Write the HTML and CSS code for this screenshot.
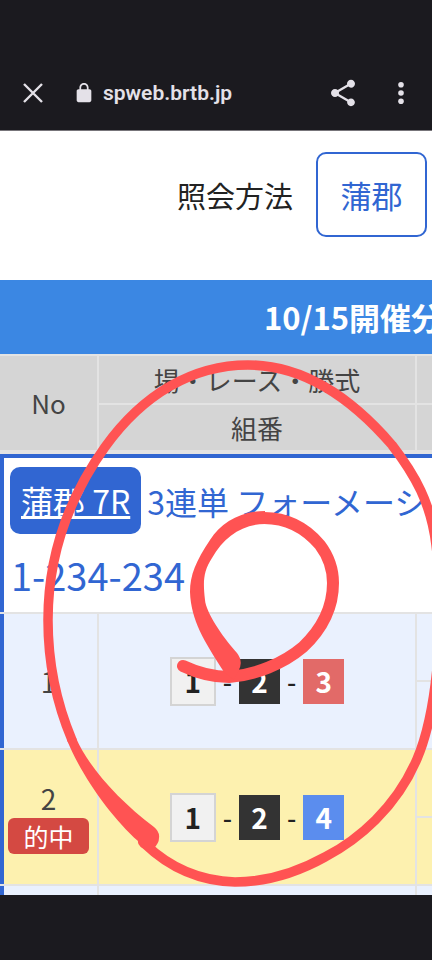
FILE: index.html
```html
<!DOCTYPE html>
<html lang="ja">
  <head>
    <meta charset="UTF-8" />
    <meta name="viewport" content="width=device-width, initial-scale=1.0" />
    <title>照会 - spweb.brtb.jp</title>
    <link rel="stylesheet" href="styles.css">
  </head>
  <body>
    <!-- Browser bar -->
    <header class="browser-bar">
      <button type="button" class="icon-button" aria-label="閉じる">
        <svg width="22" height="22" viewBox="0 0 22 22">
          <path d="M2 2L20 20M20 2L2 20" fill="none" stroke="currentColor" stroke-width="2.4" />
        </svg>
      </button>
      <div class="address">
        <svg width="22" height="22" viewBox="0 0 24 24" fill="currentColor">
          <path d="M18 8h-1V6c0-2.760-2.240-5-5-5S7 3.240 7 6v2H6c-1.100 0-2 .9-2 2v10c0 1.100.9 2 2 2h12c1.100 0 2-.9 2-2V10c0-1.100-.9-2-2-2zM8.900 8V6c0-1.710 1.390-3.100 3.100-3.100s3.100 1.390 3.100 3.100v2z" />
        </svg>
        <span>spweb.brtb.jp</span>
      </div>
      <button type="button" class="icon-button" aria-label="共有">
        <svg width="32" height="32" viewBox="0 0 24 24" fill="currentColor">
          <path d="M18 16.080c-.76 0-1.440.3-1.960.77L8.910 12.700c.05-.23.09-.46.09-.7s-.04-.47-.09-.7l7.050-4.110c.54.5 1.250.81 2.040.81 1.660 0 3-1.340 3-3s-1.340-3-3-3-3 1.340-3 3c0 .24.04.47.09.7L8.040 9.810C7.500 9.310 6.790 9 6 9c-1.660 0-3 1.340-3 3s1.340 3 3 3c.79 0 1.500-.31 2.040-.81l7.120 4.160c-.05.21-.08.43-.08.65 0 1.610 1.310 2.920 2.920 2.920s2.920-1.310 2.920-2.920-1.310-2.920-2.920-2.920z" />
        </svg>
      </button>
      <button type="button" class="icon-button" aria-label="メニュー">
        <svg width="32" height="32" viewBox="0 0 32 32" fill="currentColor">
          <circle cx="16" cy="7.700" r="2.800" />
          <circle cx="16" cy="16" r="2.800" />
          <circle cx="16" cy="24.300" r="2.800" />
        </svg>
      </button>
    </header>

    <main class="viewport">
      <div class="sheet">
        <div class="method">
          <span>照会方法</span>
          <button type="button" class="method-button">蒲郡</button>
        </div>

        <h1>10/15開催分</h1>

        <table class="bets">
          <colgroup>
            <col class="col-no" />
            <col class="col-numbers" />
            <col />
          </colgroup>
          <thead>
            <tr>
              <th rowspan="2" class="last">No</th>
              <th>場・レース・勝式</th>
              <th></th>
            </tr>
            <tr>
              <th class="inner last">組番</th>
              <th class="last"></th>
            </tr>
          </thead>
          <tbody>
            <tr class="race">
              <td colspan="3">
                <div class="race-title">
                  <a href="#" class="race-link">蒲郡 7R</a>
                  <span>3連単 フォーメーション</span>
                </div>
                <div class="race-numbers">1-234-234</div>
              </td>
            </tr>
            <tr class="bet">
              <td rowspan="2" class="no">1</td>
              <td rowspan="2">
                <div class="combo">
                  <b class="boat boat-1">1</b>-<b class="boat boat-2">2</b>-<b class="boat boat-3">3</b>
                </div>
              </td>
              <td></td>
            </tr>
            <tr class="bet">
              <td></td>
            </tr>
            <tr class="bet hit">
              <td rowspan="2" class="no">2<span class="hit-label">的中</span></td>
              <td rowspan="2">
                <div class="combo">
                  <b class="boat boat-1">1</b>-<b class="boat boat-2">2</b>-<b class="boat boat-4">4</b>
                </div>
              </td>
              <td></td>
            </tr>
            <tr class="bet hit">
              <td></td>
            </tr>
            <tr class="bet">
              <td class="no"></td>
              <td></td>
              <td></td>
            </tr>
          </tbody>
        </table>

        <!-- Red pen marks -->
        <svg class="marks" width="706" height="764" viewBox="0 131 706 764">
          <g class="pen">
            <path d="M72 740C56 702 48 665 48 620C48 560 65 503 105 447C143 394 193 365 248 365C307 365 355 402 392 445C415 475 431 503 436 545C445 615 438 710 417 759C396 808 358 840 325 857C298 872 268 882 235 882C200 881 170 868 145 844" stroke-width="9.500" />
            <path d="M183 666C200 674 215 677 229 677C255 675 283 664 303 647C322 629 333 607 333 583C333 568 329 557 320 545C304 526 286 518 264 518" stroke-width="12" />
          </g>
          <path class="ink" d="M67 740L76 738C88 766 118 800 154 827Q160 832 159 838Q159 843 154 848L148 850Q137 847 138 841C112 818 82 777 67 740Z" />
          <path class="ink" d="M265 511C240 511 221 523 210 540C196 561 190 575 190 592C191 620 204 641 224 672L234 680L238 672Q244 662 237 653C221 635 206 612 205 600C203 582 203 572 212 558C224 537 242 524 265 524Z" />
        </svg>
      </div>
    </main>

    <footer class="nav-space"></footer>
  </body>
</html>
```
FILE: styles.css
```css
:root {
  --dark: #1b1a1f;
  --bar-text: #e4e1e8;
  --blue: #3166d2;
  --banner: #3b87e3;
  --line: #e3e3e3;
  --head: #d5d5d5;
  --row: #eaf1fe;
  --hit: #fdf1af;
  --pen: #ff5353;
}

* {
  margin: 0;
  padding: 0;
  box-sizing: border-box;
}

body {
  display: flex;
  flex-direction: column;
  height: 100vh;
  background: var(--dark);
  color: #222;
  font-family: "Noto Sans CJK JP", sans-serif;
  overflow: hidden;
}

button {
  font-family: inherit;
  background: none;
  border: none;
}

/* Browser bar */
.browser-bar {
  display: flex;
  align-items: center;
  gap: 26px;
  padding: 55px 15px 0 22px;
  height: 131px;
  color: var(--bar-text);
  border-bottom: 1px solid #77757a;
}

.icon-button {
  display: flex;
  color: inherit;
}

.address {
  display: flex;
  flex: 1;
  align-items: center;
  gap: 8px;
  padding-left: 3px;
  font-family: Roboto, sans-serif;
  font-size: 21px;
  font-weight: 600;
}

.viewport {
  flex: 1;
  overflow: hidden;
  background: #fff;
}

/* The sheet is wider than the phone and runs off to the right */
.sheet {
  position: relative;
  width: 706px;
}

.method {
  display: flex;
  align-items: center;
  gap: 23px;
  padding: 21px 0 43px 177px;
  font-size: 29px;
}

.method-button {
  width: 111px;
  height: 85px;
  border: 2px solid var(--blue);
  border-radius: 10px;
  color: var(--blue);
  font-size: 31px;
}

h1 {
  height: 74px;
  background: var(--banner);
  color: #fff;
  font-size: 31px;
  line-height: 74px;
  text-align: center;
}

/* Bet table */
.bets {
  width: 100%;
  border-collapse: separate;
  border-spacing: 0;
  table-layout: fixed;
  font-size: 26px;
  line-height: 36px;
  text-align: center;
}

.col-no {
  width: 97px;
}

.col-numbers {
  width: 318px;
}

.bets th,
.bets td {
  border-top: 2px solid var(--line);
  border-left: 2px solid var(--line);
}

.bets th {
  height: 49px;
  background: var(--head);
  color: #444;
  font-weight: 400;
}

.bets th:first-child:not(.inner) {
  border-left: none;
}

.bets .last {
  height: 51px;
  border-bottom: 4px solid var(--line);
}

.bets .race td {
  height: 158px;
  padding: 9px 6px 0;
  border-top: 4px solid var(--blue);
  border-left: 4px solid var(--blue);
  color: var(--blue);
  text-align: left;
  vertical-align: top;
}

.race-title {
  display: flex;
  align-items: center;
  gap: 6px;
  font-size: 32px;
  white-space: nowrap;
}

.race-link {
  padding: 0 11px;
  border-radius: 10px;
  background: var(--blue);
  color: #fff;
  line-height: 67px;
}

.race-numbers {
  margin-top: 16px;
  padding-left: 1px;
  font-size: 38px;
  line-height: 50px;
}

.bet td {
  height: 68px;
  background: var(--row);
  color: #444;
}

.bets .no {
  padding: 0 4px;
  border-left: none;
  box-shadow: inset 4px 0 var(--blue);
  font-size: 28px;
}

.hit td {
  background: var(--hit);
}

.hit-label {
  display: block;
  margin: 2px 4px 0;
  border-radius: 6px;
  background: #d44942;
  color: #fff;
  font-size: 25px;
}

.combo {
  display: flex;
  align-items: center;
  justify-content: center;
  gap: 7px;
  color: #222;
  font-weight: 500;
}

.boat {
  width: 41px;
  height: 45px;
  color: #fff;
  font-size: 28px;
  font-weight: 700;
  line-height: 45px;
}

.boat-1 {
  width: 46px;
  height: 49px;
  border: 2px solid #d4d4d4;
  background: #f1f1f1;
  color: #222;
}

.boat-2 {
  background: #333;
}

.boat-3 {
  background: #e26a68;
}

.boat-4 {
  background: #5b8dee;
}

/* Pen marks lie over the sheet */
.marks {
  position: absolute;
  top: 0;
  left: 0;
  pointer-events: none;
}

.pen {
  fill: none;
  stroke: var(--pen);
  stroke-linecap: round;
  stroke-linejoin: round;
}

.ink {
  fill: var(--pen);
}

.nav-space {
  height: 65px;
}
```
